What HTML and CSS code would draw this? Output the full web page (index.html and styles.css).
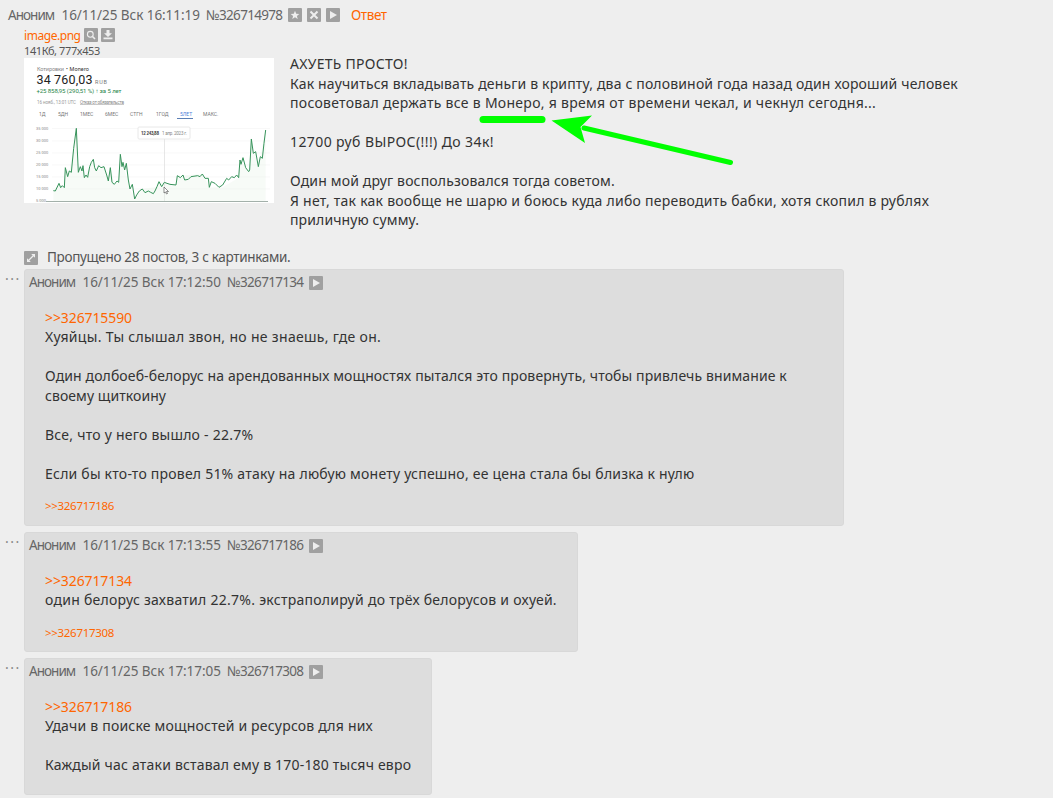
FILE: index.html
```html
<!DOCTYPE html>
<html lang="ru">
<head>
    <meta charset="UTF-8">
    <title>Тред №326714978</title>
    <link rel="stylesheet" href="styles.css">
</head>
<body>
    <svg class="sprite">
        <symbol id="star" viewBox="0 0 14 14"><path d="M7 2.7l1.2 3 3.1.2-2.4 2 .8 3.1L7 9.3l-2.7 1.7.8-3.1-2.4-2 3.1-.2z" fill="#eee"/></symbol>
        <symbol id="cross" viewBox="0 0 14 14"><path d="M3.5 3.5l7 7M10.500 3.500l-7 7" stroke="#eee" stroke-width="2"/></symbol>
        <symbol id="play" viewBox="0 0 14 14"><path d="M4 3l7 4-7 4z" fill="#eee"/></symbol>
        <symbol id="search" viewBox="0 0 14 14"><circle cx="6.300" cy="6.300" r="2.900" fill="none" stroke="#eee" stroke-width="1.100"/><path d="M8.500 8.500l2.500 2.500" stroke="#eee" stroke-width="1.600"/></symbol>
        <symbol id="download" viewBox="0 0 14 14"><path d="M5.500 2h3v3.300H11L7 9 3 5.300h2.500zM2.500 9.500h9v1.800h-9z" fill="#eee"/></symbol>
        <symbol id="expand" viewBox="0 0 14 14"><path d="M4 10l6-6" stroke="#eee" stroke-width="1.300"/><path d="M7.200 3H11v3.800zM3 7.200V11h3.800z" fill="#eee"/></symbol>
    </svg>

    <div class="thread">
        <div class="details op-details">
            <span class="name">Аноним</span>
            <span class="date">16/11/25 Вск 16:11:19</span>
            <span class="num">№326714978</span>
            <svg class="icon"><use href="#star"/></svg>
            <svg class="icon"><use href="#cross"/></svg>
            <svg class="icon"><use href="#play"/></svg>
            <a class="reply-link">Ответ</a>
        </div>

        <div class="op">
            <div class="file">
                <div class="file-name">
                    <a>image.png</a>
                    <svg class="icon"><use href="#search"/></svg>
                    <svg class="icon"><use href="#download"/></svg>
                </div>
                <div class="file-size">141Кб, 777x453</div>
                <svg class="thumb" viewBox="0 0 250 145">
                    <rect width="250" height="145" fill="#fff"/>
                    <text x="13" y="13" font-size="5.500" fill="#888" textLength="27">Котировки</text>
                    <text x="42" y="13" font-size="5.500" fill="#333" textLength="23">• Monero</text>
                    <text x="12.500" y="26" font-size="12.500" fill="#222" textLength="56">34 760,03</text>
                    <text x="71" y="26" font-size="5.500" fill="#777" textLength="12">RUB</text>
                    <text x="12.500" y="35" font-size="6" fill="#28854a" textLength="85">+25 858,95 (290,51 %) ↑ за 5 лет</text>
                    <text x="13" y="45.500" font-size="4.500" fill="#999" textLength="39">16 нояб., 13:01 UTC</text>
                    <text x="56" y="45.500" font-size="4.500" fill="#888" textLength="44" text-decoration="underline">Отказ от обязательств</text>
                    <g font-size="5" fill="#777">
                        <text x="15" y="58">1Д</text>
                        <text x="34" y="58">5ДН</text>
                        <text x="56" y="58">1МЕС</text>
                        <text x="81" y="58">6МЕС</text>
                        <text x="106" y="58">СТГН</text>
                        <text x="132" y="58">1ГОД</text>
                        <text x="156" y="58" fill="#4f7fd9">5ЛЕТ</text>
                        <text x="179" y="58">МАКС.</text>
                    </g>
                    <path d="M153 60.500h16" stroke="#5b7fb5"/>
                    <g stroke="#f3f3f3" stroke-width=".6">
                        <path d="M28 70.500h218M28 83h218M28 95h218M28 107h218M28 119h218M28 131h218"/>
                    </g>
                    <g font-size="4" fill="#888">
                        <text x="12" y="72">35 000</text>
                        <text x="12" y="84">30 000</text>
                        <text x="12" y="96">25 000</text>
                        <text x="12" y="108">20 000</text>
                        <text x="12" y="120">15 000</text>
                        <text x="12" y="132">10 000</text>
                        <text x="12" y="144">5 000</text>
                    </g>
                    <path d="M22 143.500h222" stroke="#8c9c94" stroke-width=".8"/>
                    <path d="M140.500 80v63" stroke="#ddd" stroke-width=".7"/>
                    <g transform="translate(-4 67) scale(.33333)">
                        <path class="area" d="M100 197L117 175 133 188 136 128 148 138 161 70 169 10 175 142 189 122 193 158 209 125 220 103 229 138 252 125 265 168 271 128 283 178 296 172 301 88 314 135 330 192 344 222 367 192 411 185 417 170 468 180 472 152 547 147 568 187 608 187 656 158 660 105 686 140 694 42 715 125 737 15V228H100z"/>
                        <path class="price" d="M100 197L106 198 117 175 122 188 127 182 133 188 136 128 143 155 148 138 154 142 161 70 169 10 175 142 181 125 186 138 189 122 193 158 198 150 203 157 209 125 214 112 220 103 224 128 229 138 236 122 243 128 252 125 260 150 265 168 271 128 276 172 283 178 291 168 296 172 301 88 306 125 309 112 314 135 319 115 325 165 330 192 337 178 344 222 350 210 358 198 367 192 375 203 385 198 392 202 400 206 405 198 411 185 417 170 425 185 433 172 441 175 450 178 468 180 472 152 481 158 489 150 494 165 505 163 513 155 533 152 540 155 547 147 555 160 565 160 568 187 574 170 585 175 597 187 608 180 620 160 626 165 635 155 643 158 650 150 656 158 660 105 663 118 669 98 677 128 686 140 689 135 694 42 700 85 707 80 715 125 721 95 727 100 732 55 737 15"/>
                    </g>
                    <rect x="114" y="69" width="52" height="12" rx="1" fill="#fff" stroke="#e2e2e2" stroke-width=".8"/>
                    <text x="117" y="77" font-size="4.500" font-weight="bold" fill="#444" textLength="18">12 243,88</text>
                    <text x="138" y="77" font-size="4.500" fill="#888" textLength="25">1 апр. 2023 г.</text>
                    <path d="M140 129v6l1.500-1 1 2 1-.5-1-2h2z" fill="#fff" stroke="#444" stroke-width=".6"/>
                </svg>
            </div>
            <div class="message">
                <span class="l1">АХУЕТЬ ПРОСТО!</span><br>
                <span class="l2">Как научиться вкладывать деньги в крипту, два с половиной года назад один хороший человек</span><br>
                <span class="l3">посоветовал держать все в <span class="marked">Монеро,<svg class="arrow" viewBox="0 0 260 60"><path d="M4 7.500h59" stroke="#0f0" stroke-width="7" stroke-linecap="round"/><path d="M105 16L251.500 50.500" stroke="#0f0" stroke-width="5" stroke-linecap="round"/><path d="M72.500 8.500L113 3.500 101.500 15 106 31z" fill="#0f0"/></svg></span> я время от времени чекал, и чекнул сегодня...</span><br>
                <br>
                <span class="l4">12700 руб ВЫРОС(!!!) До 34к!</span><br>
                <br>
                <span class="l5">Один мой друг воспользовался тогда советом.</span><br>
                <span class="l6">Я нет, так как вообще не шарю и боюсь куда либо переводить бабки, хотя скопил в рублях</span><br>
                <span class="l7">приличную сумму.</span>
            </div>
        </div>

        <div class="omitted">
            <svg class="icon"><use href="#expand"/></svg>
            <span>Пропущено 28 постов, 3 с картинками.</span>
        </div>

        <div class="row">
            <div class="dots">...</div>
            <div class="post post-a">
                <div class="details">
                    <span class="name">Аноним</span>
                    <span class="date">16/11/25 Вск 17:12:50</span>
                    <span class="num">№326717134</span>
                    <svg class="icon"><use href="#play"/></svg>
                </div>
                <div class="message">
                    <a>&gt;&gt;326715590</a><br>
                    <span class="a1">Хуяйцы. Ты слышал звон, но не знаешь, где он.</span><br>
                    <br>
                    <span class="a2">Один долбоеб-белорус на арендованных мощностях пытался это провернуть, чтобы привлечь внимание к</span><br>
                    <span class="a3">своему щиткоину</span><br>
                    <br>
                    <span class="a4">Все, что у него вышло - 22.7%</span><br>
                    <br>
                    <span class="a5">Если бы кто-то провел 51% атаку на любую монету успешно, ее цена стала бы близка к нулю</span>
                </div>
                <div class="refs"><a>&gt;&gt;326717186</a></div>
            </div>
        </div>

        <div class="row">
            <div class="dots">...</div>
            <div class="post post-b">
                <div class="details">
                    <span class="name">Аноним</span>
                    <span class="date">16/11/25 Вск 17:13:55</span>
                    <span class="num">№326717186</span>
                    <svg class="icon"><use href="#play"/></svg>
                </div>
                <div class="message">
                    <a>&gt;&gt;326717134</a><br>
                    <span class="b1">один белорус захватил 22.7%. экстраполируй до трёх белорусов и охуей.</span>
                </div>
                <div class="refs"><a>&gt;&gt;326717308</a></div>
            </div>
        </div>

        <div class="row">
            <div class="dots">...</div>
            <div class="post post-c">
                <div class="details">
                    <span class="name">Аноним</span>
                    <span class="date">16/11/25 Вск 17:17:05</span>
                    <span class="num">№326717308</span>
                    <svg class="icon"><use href="#play"/></svg>
                </div>
                <div class="message">
                    <a>&gt;&gt;326717186</a><br>
                    <span class="c1">Удачи в поиске мощностей и ресурсов для них</span><br>
                    <br>
                    <span class="c2">Каждый час атаки вставал ему в 170-180 тысяч евро</span>
                </div>
            </div>
        </div>
    </div>
</body>
</html>
```

FILE: styles.css
```css
* {
    box-sizing: border-box;
}
body {
    margin: 0;
    height: 798px;
    overflow: hidden;
    background: #eee;
    color: #333;
    font-family: "Trebuchet MS", "Noto Sans", sans-serif;
    font-size: 14px;
    line-height: 19.5px;
}
a {
    color: #f60;
}
.sprite {
    display: none;
}
.icon {
    width: 14px;
    height: 14px;
    flex: none;
    background: #a0a0a0;
    border-radius: 1px;
}
.details {
    display: flex;
    align-items: center;
    height: 20px;
    color: #666;
    font-size: 13.5px;
    white-space: nowrap;
}
.details span,
.reply-link {
    padding-top: 1px;
}
.name {
    width: 53.5px;
    letter-spacing: -0.95px;
}
.date {
    width: 144.500px;
    letter-spacing: -0.06px;
}
.num {
    width: 82px;
    letter-spacing: -0.7px;
}
.op-details {
    padding: 0 8px;
    margin-top: 5px;
}
.op-details .icon {
    margin-right: 5px;
}
.reply-link {
    margin-left: 6px;
    letter-spacing: -0.4px;
}
.op {
    display: flex;
    padding-left: 24px;
}
.file {
    width: 266px;
    font-size: 12px;
}
.file-name {
    display: flex;
    align-items: center;
    gap: 3px;
    height: 20px;
}
.file-name a {
    width: 57px;
    padding-top: 1px;
    letter-spacing: -0.45px;
}
.file-size {
    height: 13px;
    line-height: 11px;
    font-size: 11px;
    letter-spacing: -0.4px;
    color: #555;
}
.thumb {
    display: block;
    width: 250px;
    height: 145px;
    font-family: Roboto, sans-serif;
}
.price {
    fill: none;
    stroke: #36935a;
    stroke-width: 3;
}
.area {
    fill: #e3f3e6;
    opacity: 0.3;
}
.message {
    white-space: nowrap;
}
.message a {
    letter-spacing: -0.1px;
}
.op .message {
    padding-top: 29px;
}
.marked {
    position: relative;
}
.arrow {
    position: absolute;
    left: -6px;
    top: 19px;
    width: 260px;
    height: 60px;
}

/* line fitting */
.l1 { letter-spacing: 0.29px; }
.l2 { letter-spacing: 0.16px; }
.l3 { letter-spacing: 0.29px; }
.l4 { letter-spacing: 0.4px; }
.l5 { letter-spacing: 0.16px; }
.l6 { letter-spacing: 0.245px; }
.l7 { letter-spacing: 0.12px; }
.a1 { letter-spacing: 0.32px; }
.a2 { letter-spacing: 0.115px; }
.a3 { letter-spacing: 0.07px; }
.a4 { letter-spacing: 0.24px; }
.a5 { letter-spacing: 0.22px; }
.b1 { letter-spacing: 0.265px; }
.c1 { letter-spacing: 0.2px; }
.c2 { letter-spacing: 0.2px; }

.omitted {
    display: flex;
    align-items: center;
    gap: 9px;
    height: 20px;
    margin: 18px 0 1px 24px;
    color: #555;
    font-size: 13.5px;
    letter-spacing: -0.32px;
}
.omitted span {
    padding-top: 1px;
}
.row {
    display: flex;
    margin-bottom: 6px;
}
.dots {
    width: 24px;
    padding-left: 5px;
    line-height: 12px;
    color: #888;
    letter-spacing: 1.5px;
}
.post {
    padding: 3px 4px;
    background: #ddd;
    border: 1px solid #d8d8d8;
    border-radius: 3px;
}
.post .message {
    padding: 15px 16px 0;
}
.post-a {
    width: 820px;
    height: 257px;
}
.post-b {
    width: 554px;
    height: 120px;
}
.post-c {
    width: 408px;
    height: 137px;
}
.refs {
    padding: 13.4px 16px 0;
    font-size: 11.5px;
    letter-spacing: -0.3px;
}
```
